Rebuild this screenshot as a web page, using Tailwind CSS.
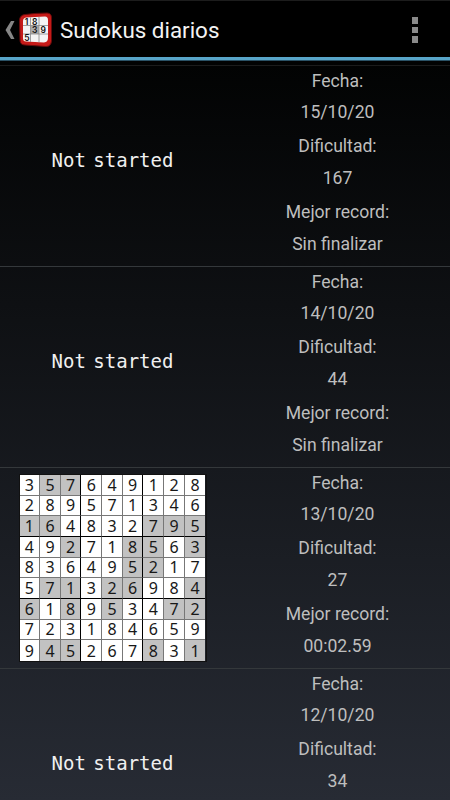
<!DOCTYPE html>
<html lang="es">
<head>
  <meta charset="UTF-8" />
  <meta name="viewport" content="width=device-width, initial-scale=1.0" />
  <title>Sudokus diarios</title>
  <script src="https://cdn.jsdelivr.net/npm/@tailwindcss/browser@4"></script>
</head>
<body class="flex h-[800px] flex-col overflow-hidden bg-[linear-gradient(#000000,#020303_8%,#272b34)] font-['Roboto',sans-serif] text-[#bebebe]">

  <header class="flex h-[57px] shrink-0 items-center border-t border-[#1c1c1c] bg-black pt-[2px]">
    <svg class="ml-[5px] h-5 w-[10px]" viewBox="0 0 10 20">
      <path d="M6 1H9.500L5 10L9.500 19H6L.5 10Z" fill="#858585" />
    </svg>
    <svg class="ml-[3px] h-[36px] w-[36px]" viewBox="0 0 36 36">
      <path d="M7 2.500Q18 1 29 1Q33.500 1 33.500 6V29Q33 34.500 28 34.500L7 33Q2 33 2 28L1.500 8Q2 3 7 2.500Z" fill="#c51a18" stroke="#650b0b" stroke-width="1" />
      <path d="M8 5.500L27 4.500Q30 4.500 30 8V26Q30 30 26 30.500L8 29.500Q5 29.500 5 26V9Q5 6 8 5.500Z" fill="#f4f4f4" />
      <path d="M12.500 13.500H21V22H12.500Z" fill="#aaa" />
      <path d="M12.500 5.500V30M21 5V30.500M5 13.500H30M5 22H30" stroke="#888" stroke-width=".8" />
      <g class="font-['Inter',sans-serif] text-[8.500px] font-semibold" fill="#111" text-anchor="middle">
        <text x="8.500" y="12.500">1</text>
        <text x="16.700" y="12.500">8</text>
        <text x="16.700" y="21">3</text>
        <text x="25.300" y="21">9</text>
        <text x="9" y="29">5</text>
      </g>
    </svg>
    <h1 class="ml-[6px] pt-px text-[22.400px] leading-none text-[#f3f3f3]">Sudokus diarios</h1>
    <div class="mr-[32px] ml-auto flex flex-col gap-[3px]">
      <i class="size-[6.500px] bg-[#8a8a8a]"></i>
      <i class="size-[6.500px] bg-[#8a8a8a]"></i>
      <i class="size-[6.500px] bg-[#8a8a8a]"></i>
    </div>
  </header>
  <div class="h-[4px] shrink-0 border-b border-[#2b5367] bg-[#58a5c9]"></div>

  <main id="list" class="mt-[4px] min-h-0 grow border-t border-[#1b1c1c]"></main>

  <script>
    // x after a digit marks a given (grey) cell
    const solved = [
      '3 5x 7x 6 4 9 1 2 8',
      '2 8 9 5 7 1 3 4 6',
      '1x 6x 4 8 3 2 7x 9x 5x',
      '4 9 2x 7 1 8x 5x 6 3x',
      '8 3 6 4 9 5x 2x 1 7',
      '5 7x 1x 3 2x 6x 9 8 4x',
      '6x 1 8x 9 5x 3 4 7x 2x',
      '7 2 3 1 8 4 6 5 9',
      '9 4x 5x 2 6 7 8x 3 1x',
    ];

    const days = [
      { date: '15/10/20', level: 167, record: 'Sin finalizar' },
      { date: '14/10/20', level: 44, record: 'Sin finalizar' },
      { date: '13/10/20', level: 27, record: '00:02.59', board: solved },
      { date: '12/10/20', level: 34 },
    ];

    function cell(value, row, col) {
      const bg = value.endsWith('x') ? 'bg-[#c2c2c2]' : 'bg-white';
      const right = col === 8 ? '' : col % 3 === 2 ? 'border-r border-r-black' : 'border-r border-r-[#777]';
      const bottom = row === 8 ? '' : row % 3 === 2 ? 'border-b border-b-black' : 'border-b border-b-[#777]';
      return `<div class="flex items-center justify-center ${bg} ${right} ${bottom}">${value[0]}</div>`;
    }

    function preview(board) {
      if (!board) {
        return `<p class="mt-[83px] font-['DejaVu_Sans_Mono',monospace] text-[19px] leading-[22px] [word-spacing:-4px] text-[#f0f0f0]">Not started</p>`;
      }
      const cells = board.map((line, r) => line.split(' ').map((v, c) => cell(v, r, c)).join('')).join('');
      return `<div class="mt-[6px] grid h-[188px] w-[188px] grid-cols-9 grid-rows-9 border border-[#111] font-['Noto_Sans',sans-serif] text-[16px] leading-none text-[#181818]">${cells}</div>`;
    }

    function record(text) {
      if (!text) return '';
      return `
          <p class="h-[32px] leading-[30px]">Mejor record:</p>
          <p class="leading-[30px]">${text}</p>`;
    }

    document.getElementById('list').innerHTML = days.map(d => `
      <section class="grid grid-cols-2 ${d.record ? 'h-[201px] border-b border-[#34383b]' : 'h-[131px]'}">
        <div class="flex items-start justify-center">${preview(d.board)}</div>
        <div class="text-center text-[17.600px]">
          <p class="h-[31px] leading-[31px]">Fecha:</p>
          <p class="h-[34px] leading-[31px]">${d.date}</p>
          <p class="h-[32px] leading-[30px]">Dificultad:</p>
          <p class="h-[34px] leading-[30px]">${d.level}</p>${record(d.record)}
        </div>
      </section>`).join('');
  </script>

</body>
</html>
